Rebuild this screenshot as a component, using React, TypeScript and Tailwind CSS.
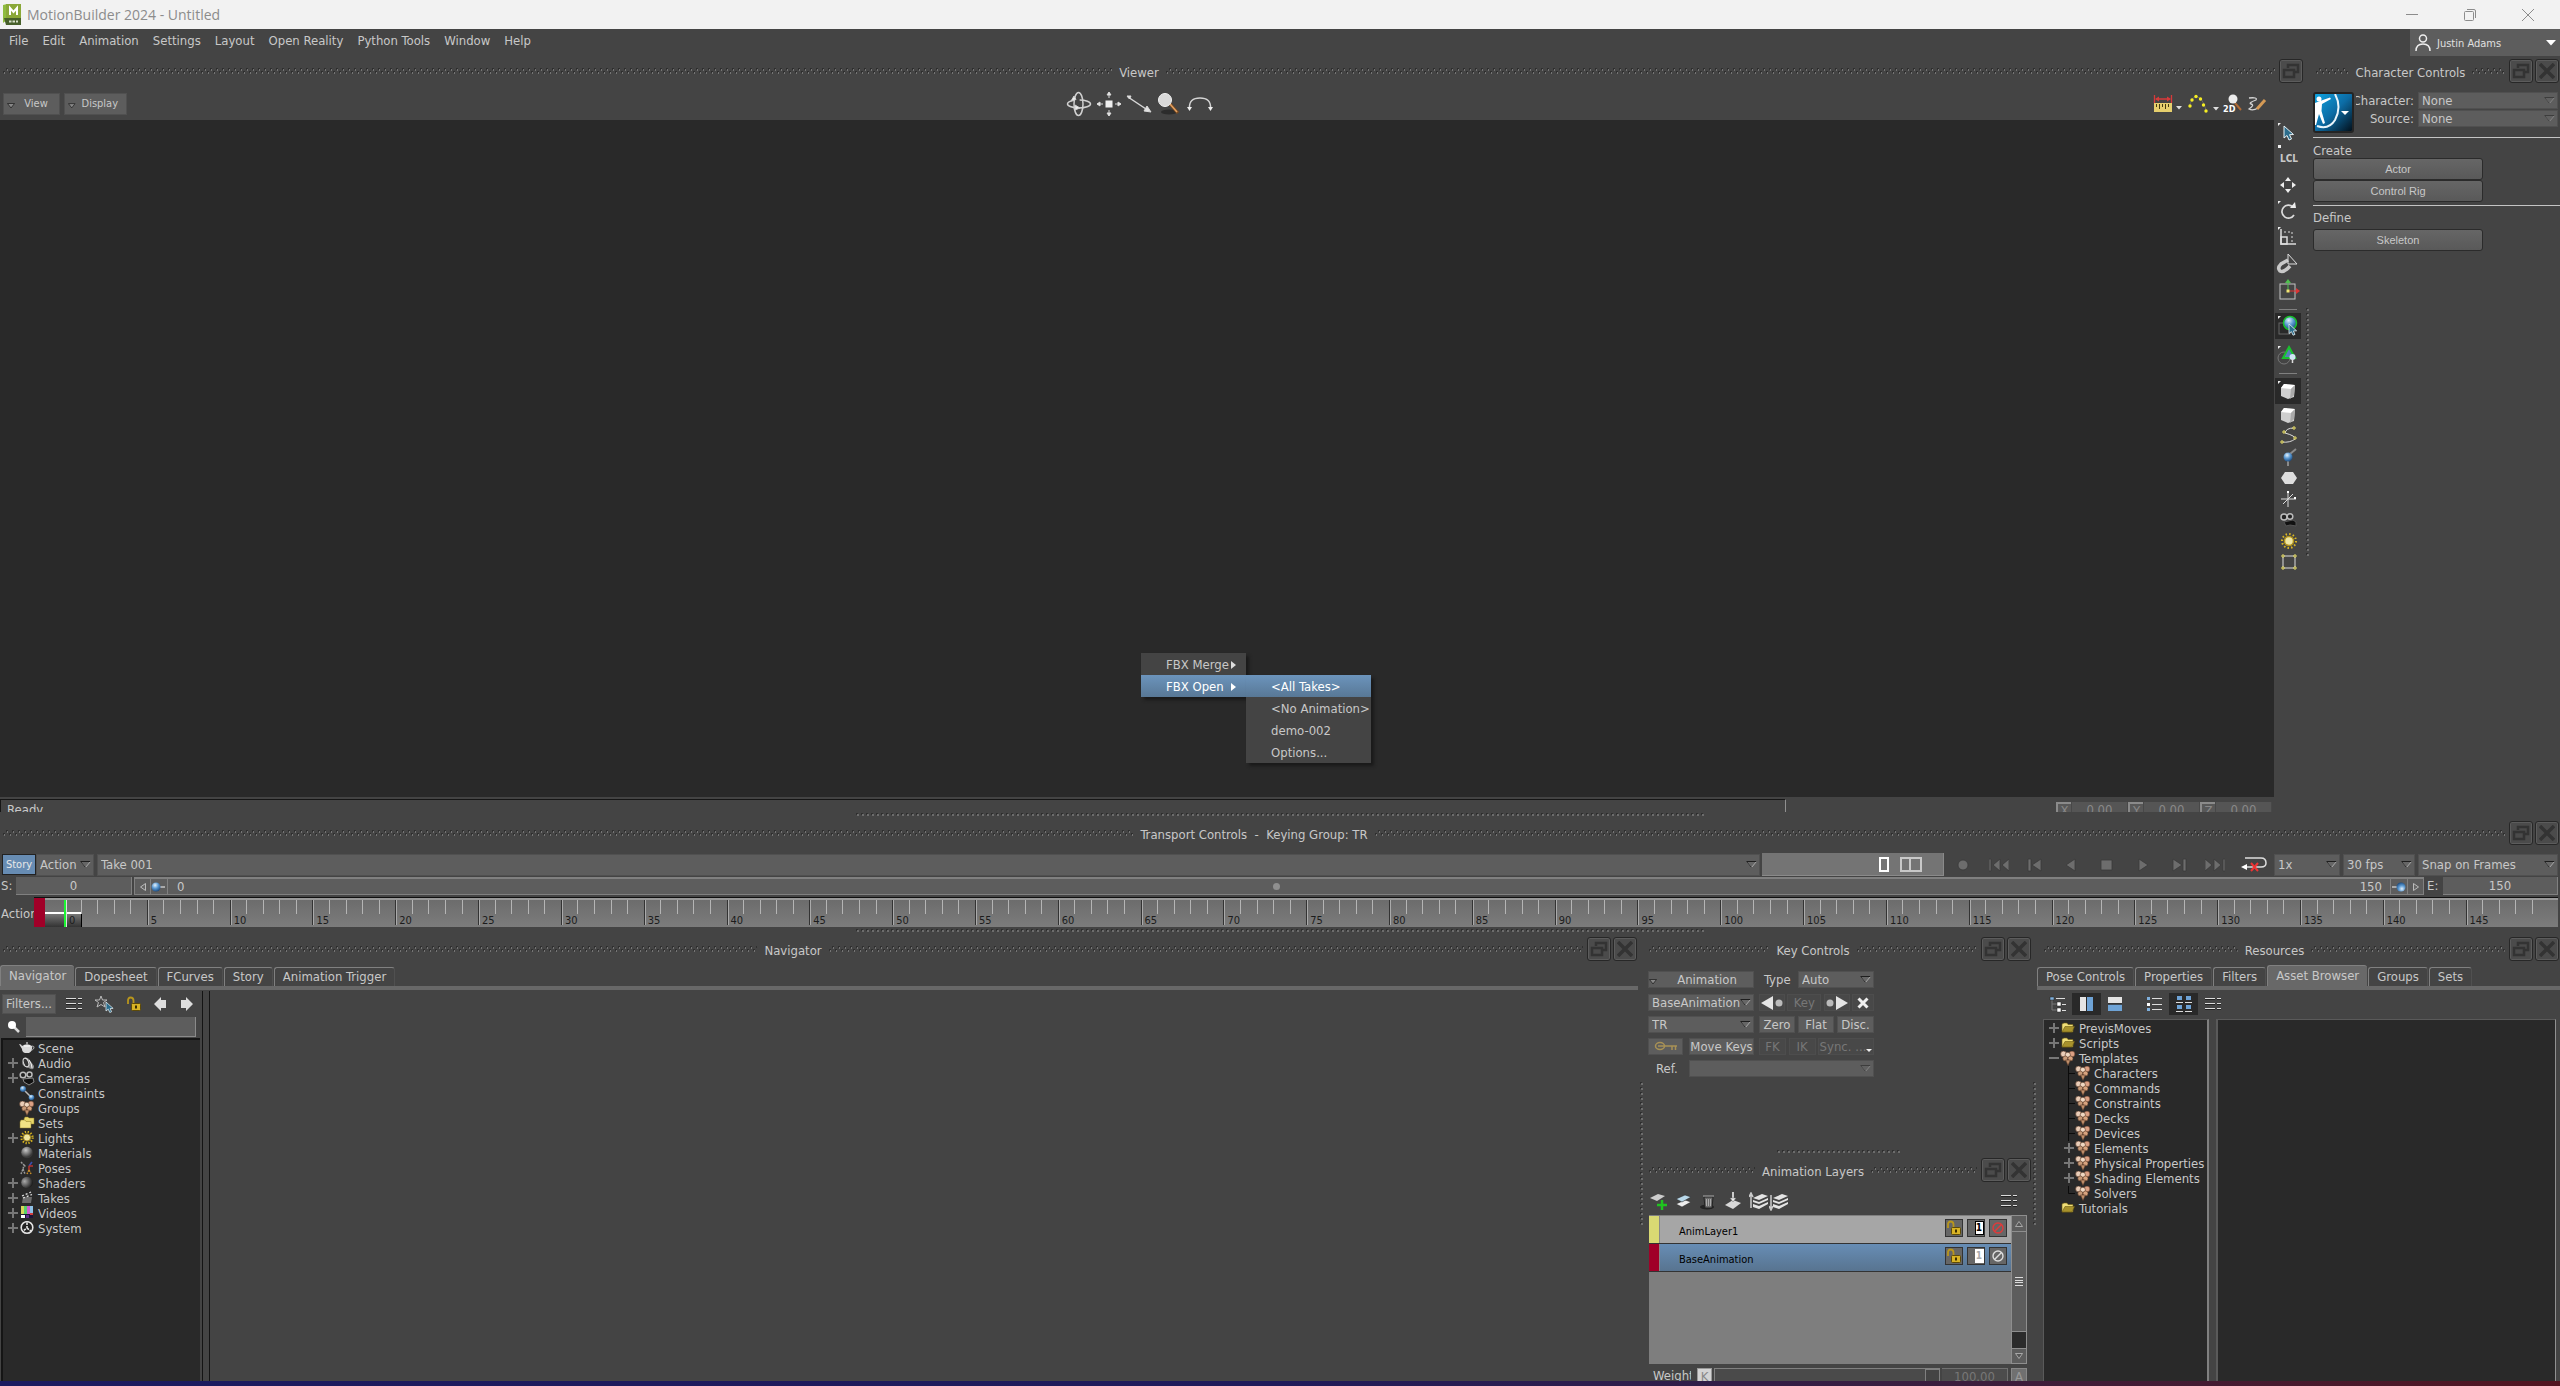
import type { ReactNode } from 'react';

const frames = Array.from({ length: 150 }, (_, i) => i);

const menus = ['File', 'Edit', 'Animation', 'Settings', 'Layout', 'Open Reality', 'Python Tools', 'Window', 'Help'];

const navigatorItems = [
  { label: 'Scene', icon: 'teapot', open: '' },
  { label: 'Audio', icon: 'audio', open: '+' },
  { label: 'Cameras', icon: 'camera', open: '+' },
  { label: 'Constraints', icon: 'constraint', open: '' },
  { label: 'Groups', icon: 'group', open: '' },
  { label: 'Sets', icon: 'sets', open: '' },
  { label: 'Lights', icon: 'sun', open: '+' },
  { label: 'Materials', icon: 'material', open: '' },
  { label: 'Poses', icon: 'pose', open: '' },
  { label: 'Shaders', icon: 'shader', open: '+' },
  { label: 'Takes', icon: 'take', open: '+' },
  { label: 'Videos', icon: 'video', open: '+' },
  { label: 'System', icon: 'system', open: '+' },
];

const assetItems = [
  { label: 'PrevisMoves', icon: 'folder', open: '+', child: false },
  { label: 'Scripts', icon: 'folder', open: '+', child: false },
  { label: 'Templates', icon: 'group', open: '-', child: false },
  { label: 'Characters', icon: 'group', open: '', child: true },
  { label: 'Commands', icon: 'group', open: '', child: true },
  { label: 'Constraints', icon: 'group', open: '', child: true },
  { label: 'Decks', icon: 'group', open: '', child: true },
  { label: 'Devices', icon: 'group', open: '', child: true },
  { label: 'Elements', icon: 'group', open: '+', child: true },
  { label: 'Physical Properties', icon: 'group', open: '+', child: true },
  { label: 'Shading Elements', icon: 'group', open: '+', child: true },
  { label: 'Solvers', icon: 'group', open: 'last', child: true },
  { label: 'Tutorials', icon: 'folder', open: '', child: false },
];

// Patterns and gradients shared by all the drawings
function Defs() {
  return (
    <svg width="0" height="0" className="absolute">
      <defs>
        <pattern id="hatch" width="6" height="6" patternUnits="userSpaceOnUse">
          <rect x="3" y="0" width="2" height="2" fill="#2f2f2f" />
          <rect x="4" y="1" width="1" height="2" fill="#757575" />
          <rect x="0" y="3" width="2" height="2" fill="#2f2f2f" />
          <rect x="1" y="4" width="1" height="2" fill="#757575" />
        </pattern>
        <pattern id="dots" width="5" height="5" patternUnits="userSpaceOnUse">
          <rect x="0" y="0" width="2" height="2" fill="#2f2f2f" />
          <rect x="1" y="1" width="2" height="2" fill="#6c6c6c" />
        </pattern>
        <radialGradient id="gray" cx="0.4" cy="0.3" r="0.6">
          <stop offset="0" stopColor="#c8c8c8" />
          <stop offset="1" stopColor="#3a3a3a" />
        </radialGradient>
        <radialGradient id="dark" cx="0.3" cy="0.4" r="0.7">
          <stop offset="0" stopColor="#aaaaaa" />
          <stop offset="1" stopColor="#1c1c1c" />
        </radialGradient>
        <radialGradient id="blue" cx="0.4" cy="0.3" r="0.7">
          <stop offset="0" stopColor="#e4f1fb" />
          <stop offset="0.5" stopColor="#5d9bd3" />
          <stop offset="1" stopColor="#1f4f84" />
        </radialGradient>
        <linearGradient id="logo" x1="0" y1="0" x2="1" y2="1">
          <stop offset="0" stopColor="#0fa3e0" />
          <stop offset="0.5" stopColor="#0c6ca5" />
          <stop offset="1" stopColor="#03111c" />
        </linearGradient>
      </defs>
    </svg>
  );
}

function Hatch() {
  return (
    <svg className="h-[6px] w-0 min-w-0 flex-1">
      <rect width="100%" height="6" fill="url(#hatch)" />
    </svg>
  );
}

function Handle({ className }: { className: string }) {
  return (
    <svg className={className}>
      <rect width="100%" height="100%" fill="url(#dots)" />
    </svg>
  );
}

function DockButtons({ close = true }: { close?: boolean }) {
  const box = 'flex h-6 w-6 items-center justify-center rounded-[3px] border border-[#272727] bg-[#4b4b4b] shadow-[inset_0_0_0_1px_#5c5c5c]';
  return (
    <div className="flex gap-[2px]">
      <button aria-label="Float" className={box}>
        <svg width="18" height="16" viewBox="0 0 18 16" fill="none" stroke="#333" strokeWidth="2.5">
          <path d="M6 5V2H16V9H13" />
          <rect x="2" y="7" width="10" height="7" />
        </svg>
      </button>
      {close && (
        <button aria-label="Close" className={box}>
          <svg width="16" height="16" viewBox="0 0 16 16" stroke="#333" strokeWidth="3.5">
            <path d="M1 1L15 15M15 1L1 15" />
          </svg>
        </button>
      )}
    </div>
  );
}

function DockHeader({ title, close = true }: { title: string; close?: boolean }) {
  return (
    <div className="flex h-[26px] items-center gap-1 pl-[3px] pr-px">
      <div className="flex min-w-0 flex-1 items-center gap-[7px]">
        <Hatch />
        <h2 className="whitespace-pre pt-[3px]">{title}</h2>
        <Hatch />
      </div>
      <DockButtons close={close} />
    </div>
  );
}

function Arrow({ dim = false }: { dim?: boolean }) {
  return (
    <svg width="11" height="7" viewBox="0 0 11 7" className={dim ? 'opacity-50' : ''}>
      <path d="M0.5 0.5H10.5L5.5 6.5Z" fill="#666" stroke="#a9a9a9" />
      <path d="M0.5 0.5H10.5M0.5 0.5L5.5 6.5" stroke="#1e1e1e" />
    </svg>
  );
}

function Combo({ value, label, className, dim = false }: { value: string; label: string; className: string; dim?: boolean }) {
  return (
    <div className={`relative ${className}`}>
      <select aria-label={label} className="h-full w-full appearance-none border border-[#505050] bg-[#5d5d5d] pl-[3px] text-[#c8c8c8]">
        <option>{value}</option>
      </select>
      <span className="pointer-events-none absolute inset-y-0 right-[3px] flex items-center">
        <Arrow dim={dim} />
      </span>
    </div>
  );
}

function FlatButton({ children, className = '', disabled = false }: { children: ReactNode; className?: string; disabled?: boolean }) {
  return (
    <button
      disabled={disabled}
      className={`flex h-[17px] items-center justify-center whitespace-nowrap border ${
        disabled ? 'border-[#4d4d4d] bg-[#484848] text-[#777]' : 'border-[#505050] bg-[#5d5d5d]'
      } ${className}`}
    >
      {children}
    </button>
  );
}

function Lock() {
  return (
    <svg width="16" height="16" viewBox="0 0 16 16">
      <path d="M2 8V4.500Q2 1.500 4.500 1.500Q7.500 1.500 7.500 4.500V8" fill="none" stroke="#b8961d" strokeWidth="1.800" />
      <rect x="5.500" y="7.500" width="9" height="7" rx="1" fill="#d8b325" stroke="#5d4a08" />
      <path d="M10 9.500V12.500" stroke="#3a2d00" strokeWidth="2" />
    </svg>
  );
}

function ListIcon() {
  return (
    <svg width="18" height="14" viewBox="0 0 18 14" stroke="#dcdcdc" strokeWidth="1">
      <path d="M1 1.500H11M13 1.500H17M1 6.500H11M13 6.500H17M1 11.500H11M13 11.500H17" />
      <path d="M1 2.500H11M13 2.500H17M1 7.500H11M13 7.500H17M1 12.500H11M13 12.500H17" stroke="#222" />
    </svg>
  );
}

function Cursor() {
  return <path d="M0 0L0 12L3 9.500L5 14L7.500 13L5.500 8.700L9.500 8.500Z" fill="#2c6d8c" stroke="#e8f2f6" />;
}

function TreeIcon({ name }: { name: string }) {
  return (
    <svg width="16" height="15" viewBox="0 0 16 15" className="shrink-0">
      {name === 'teapot' && (
        <g>
          <path d="M3 5Q8 1.500 13 5Q14 10 10 12H6Q3 11 3 8L0 3L2 3.500Z" fill="#d9d9d9" />
          <path d="M13 5Q15.500 5 15 7Q14 9 12 9.500" fill="none" stroke="#aaa" />
          <path d="M7 2H9M5 5H11" stroke="#fff" />
        </g>
      )}
      {name === 'audio' && (
        <g>
          <path d="M4 4Q6 0 10 3L15 10Q15 14 12 13L5 10Q2 8 4 4Z" fill="#8d8d8d" />
          <ellipse cx="7" cy="6.500" rx="2.500" ry="4.500" transform="rotate(-20 7 6.500)" fill="#333" stroke="#e0e0e0" />
          <path d="M10 4Q13 8 13 12" stroke="#f2f2f2" fill="none" />
        </g>
      )}
      {name === 'camera' && (
        <g>
          <circle cx="4" cy="4" r="2.800" fill="#222" stroke="#bbb" strokeWidth="1.500" />
          <circle cx="10.500" cy="3.500" r="2.500" fill="#222" stroke="#bbb" strokeWidth="1.500" />
          <path d="M4 8L14 7L15 11L10 14L5 11Z" fill="#111" stroke="#888" />
        </g>
      )}
      {name === 'constraint' && (
        <g>
          <path d="M4 3L13 12" stroke="#b9b9b9" strokeWidth="1.500" />
          <circle cx="4" cy="3" r="3" fill="url(#blue)" />
          <circle cx="12.500" cy="11.500" r="2.800" fill="url(#blue)" />
        </g>
      )}
      {name === 'group' && (
        <g stroke="#5a3a28" strokeWidth="0.600">
          <circle cx="3.500" cy="3" r="2.900" fill="#e9cdb8" />
          <circle cx="12" cy="3" r="2.900" fill="#dba084" />
          <circle cx="7.800" cy="4" r="2.700" fill="#f0d8c2" />
          <circle cx="5.300" cy="7.500" r="2.500" fill="#c79a78" />
          <circle cx="10.500" cy="7.500" r="2.500" fill="#d8a47f" />
          <path d="M5.500 9H10.500L8 14.500Z" fill="#c0906b" />
        </g>
      )}
      {name === 'sets' && (
        <g stroke="#8c7a25" strokeWidth="0.500">
          <path d="M5 3L6 1H9L10 2H15V8H5Z" fill="#e8d76a" />
          <path d="M1 6L2 4H6L7 5.500H12V12H1Z" fill="#f1e285" />
        </g>
      )}
      {name === 'sun' && (
        <g>
          <circle cx="8" cy="6.500" r="5.600" fill="none" stroke="#d8b520" strokeWidth="2.200" strokeDasharray="1.300 1.630" />
          <circle cx="8" cy="6.500" r="3.600" fill="#f0e6a0" stroke="#a88a1a" />
        </g>
      )}
      {name === 'material' && <circle cx="8" cy="6.500" r="5.800" fill="url(#gray)" />}
      {name === 'shader' && <circle cx="8" cy="6.500" r="5.800" fill="url(#dark)" />}
      {name === 'pose' && (
        <g fill="none" strokeWidth="1.500">
          <path d="M2 1L5 4L4 8L2 13M5 4L7 6M4 8L6 13" stroke="#999" strokeDasharray="2 1" />
          <path d="M13 1L10 5" stroke="#3b4fb0" />
          <path d="M10 5H14M10 5V9" stroke="#b8352f" />
          <path d="M10 9L8 13M10 9L12 13" stroke="#c88e2a" strokeDasharray="2 1" />
        </g>
      )}
      {name === 'take' && (
        <g>
          <path d="M4 6H13L12 12H3Z" fill="#6d6d6d" />
          <path d="M3 5L12 1L13 3L4 7Z" fill="#333" />
          <path d="M3 5L12 1M4 7L13 3.500" stroke="#e2e2e2" strokeWidth="1.300" strokeDasharray="2 2" />
        </g>
      )}
      {name === 'video' && (
        <g>
          <rect x="2" y="0" width="3" height="8" fill="#d6d65a" />
          <rect x="5" y="0" width="3" height="8" fill="#59cf6b" />
          <rect x="8" y="0" width="3" height="8" fill="#d35bd0" />
          <rect x="11" y="0" width="3" height="8" fill="#8fc1e6" />
          <rect x="2" y="8" width="12" height="4" fill="#1c1336" />
          <rect x="2" y="9" width="4" height="3" fill="#fff" />
          <rect x="7" y="9" width="3" height="3" fill="#5d2b86" />
          <rect x="11" y="7" width="3" height="2" fill="#d33c3c" />
        </g>
      )}
      {name === 'system' && (
        <g>
          <circle cx="8" cy="6.500" r="5.800" fill="#222" stroke="#e4e4e4" strokeWidth="1.600" />
          <path d="M8 1.500V7L3.500 10.500M8 7L12.500 10.500" stroke="#e4e4e4" strokeWidth="1.600" fill="none" strokeDasharray="2.500 1" />
        </g>
      )}
      {name === 'folder' && (
        <g stroke="#6c5c14" strokeWidth="0.600">
          <path d="M2 3L4 2H7L8 3.500H13V11H2Z" fill="#f0df78" />
          <path d="M2 11L5 5.500H14.500L12 11Z" fill="#a8922c" />
        </g>
      )}
    </svg>
  );
}

function TreeToggle({ open, child = false }: { open: string; child?: boolean }) {
  return (
    <svg width="11" height="15" viewBox="0 0 11 15" className="shrink-0">
      {open === '+' && <path d="M0 7H10M5 2V12" stroke="#777" strokeWidth="2" />}
      {open === '-' && <path d="M0 7H10" stroke="#777" strokeWidth="2" />}
      {child && open === '' && <path d="M4.500 0V15M5 7.500H11" stroke="#0b0b0b" />}
      {open === 'last' && <path d="M4.500 0V7.500H11" fill="none" stroke="#0b0b0b" />}
    </svg>
  );
}

function Tabs({ items, active }: { items: string[]; active: string }) {
  return (
    <div className="flex h-[28px] items-end gap-px border-b-4 border-[#686868]">
      {items.map((item) => (
        <button
          key={item}
          className={`whitespace-nowrap rounded-t-[3px] border-l border-t border-[#808080] px-2 ${
            item === active ? 'h-[21px] bg-[#686868]' : 'h-[19px] border-r border-r-[#505050]'
          }`}
        >
          {item}
        </button>
      ))}
    </div>
  );
}

function CharacterControls() {
  const wide = 'flex h-[22px] w-[170px] items-center justify-center rounded-[3px] border border-[#2b2b2b] bg-linear-to-b from-[#666] to-[#595959] font-["Liberation_Sans",sans-serif] text-[11px]';
  return (
    <aside className="flex w-[247px] flex-col">
      <div className="pt-[2px]">
        <DockHeader title="Character Controls" />
      </div>
      <div className="mt-2 flex items-start">
        <button aria-label="Character menu" className="h-[41px] w-[41px] shrink-0 overflow-hidden rounded-[3px] border-2 border-[#242424]">
          <svg width="37" height="37" viewBox="0 0 37 37">
            <rect width="37" height="37" fill="url(#logo)" />
            <path d="M2 32Q14 36 20 26Q27 13 20 0" fill="none" stroke="#e9f4fa" strokeWidth="2" />
            <circle cx="4" cy="5" r="2.500" fill="#fff" />
            <path d="M0 9L5 7L15 3.500L16 5L7 10L6.500 17L10 29L8 30L4 20L1 31H0Z" fill="#fff" />
            <path d="M26 17H34L30 21Z" fill="#fff" />
          </svg>
        </button>
        <div className="flex min-w-0 flex-1 flex-col gap-px pl-[2px] pr-[2px]">
          <div className="flex items-center gap-1">
            <span className="flex w-[58px] justify-end overflow-hidden whitespace-nowrap">Character:</span>
            <Combo value="None" label="Character" className="h-[17px] flex-1" dim />
          </div>
          <div className="flex items-center gap-1">
            <span className="flex w-[58px] justify-end">Source:</span>
            <Combo value="None" label="Source" className="h-[17px] flex-1" dim />
          </div>
        </div>
      </div>
      <div className="mt-1 border-t border-[#c4c4c4] pt-[5px]">
        <h3 className="leading-[15px]">Create</h3>
        <button className={wide}>Actor</button>
        <button className={wide}>Control Rig</button>
      </div>
      <div className="mt-[3px] border-t border-[#c4c4c4] pt-1">
        <h3 className="mb-1 leading-[15px]">Define</h3>
        <button className={wide}>Skeleton</button>
      </div>
    </aside>
  );
}

function ViewerToolbar() {
  return (
    <div className="flex h-8 items-center justify-between pl-[3px] pr-[7px]">
      <div className="flex w-[124px] gap-1">
        {['View', 'Display'].map((name) => (
          <button key={name} className="flex h-[22px] w-[63px] items-center gap-[6px] border border-[#505050] bg-[#5d5d5d] pl-[3px] text-[11px]">
            <svg width="8" height="6" viewBox="0 0 8 6" className="mt-1"><path d="M0.500 0.500H7.500L4 5Z" fill="#888" stroke="#222" strokeWidth="0.800" /></svg>
            <span className="flex-1 pr-2 text-center">{name}</span>
          </button>
        ))}
      </div>
      <div className="flex items-center gap-1">
        <button aria-label="Orbit">
          <svg width="26" height="26" viewBox="0 0 26 26" fill="none" stroke="#d0d0d0" strokeWidth="1.500">
            <ellipse cx="13" cy="13" rx="11.500" ry="4" strokeDasharray="34 5 60" />
            <ellipse cx="12.500" cy="13" rx="4.500" ry="11.500" />
            <path d="M14 17L9 14V19ZM8 5L5 10L10 8.500Z" fill="#eee" strokeWidth="1" />
          </svg>
        </button>
        <button aria-label="Pan">
          <svg width="26" height="26" viewBox="0 0 26 26" fill="#eee" stroke="#d8d8d8" strokeWidth="1">
            <rect x="9.500" y="9.500" width="7" height="7" stroke="none" />
            <path d="M13 1V7M13 19V25M1 13H7M19 13H25" />
            <path d="M11 4L13 1L15 4ZM11 22L13 25L15 22ZM4 11L1 13L4 15ZM22 11L25 13L22 15Z" />
          </svg>
        </button>
        <button aria-label="Dolly">
          <svg width="26" height="20" viewBox="0 0 26 20" fill="#e2e2e2" stroke="#d8d8d8">
            <path d="M2 3L23 17" strokeWidth="1.500" />
            <path d="M1 2H5L3.500 5ZM25 18L18 17L21 12Z" />
          </svg>
        </button>
        <button aria-label="Zoom">
          <svg width="26" height="24" viewBox="0 0 26 24">
            <ellipse cx="13" cy="20" rx="8" ry="2.500" fill="#2c2c2c" />
            <path d="M14 12L22 21" stroke="#7a4a20" strokeWidth="3" />
            <path d="M14 12L21 20" stroke="#e2a263" strokeWidth="1.500" />
            <circle cx="9" cy="8" r="6.500" fill="#d9d9d9" stroke="#f2f2f2" />
          </svg>
        </button>
        <button aria-label="Roll">
          <svg width="28" height="18" viewBox="0 0 28 18">
            <path d="M3.500 13Q3 3 14 3Q25 3 24.500 13" fill="none" stroke="#d4d4d4" strokeWidth="1.500" />
            <path d="M1 12H6L3.500 16ZM22 12H27L24.500 16Z" fill="#eee" />
          </svg>
        </button>
      </div>
      <div className="flex items-center gap-1">
        <button aria-label="Ruler" className="flex items-end gap-[3px]">
          <svg width="20" height="18" viewBox="0 0 20 18">
            <path d="M1.500 0V8M18.500 0V8M3 4H17" stroke="#d63a3a" strokeWidth="1.300" />
            <path d="M2 4L6 1.500V6.500ZM18 4L14 1.500V6.500Z" fill="#d63a3a" />
            <rect x="1" y="8" width="18" height="9" fill="#e6cf6d" />
            <path d="M3.500 9V12M6.500 9V14M9.500 9V12M12.500 9V14M15.500 9V12" stroke="#443a10" />
          </svg>
          <svg width="6" height="7" viewBox="0 0 6 7"><path d="M0 0H6L3 3.500Z" fill="#ddd" /></svg>
        </button>
        <button aria-label="Trajectory" className="flex items-end gap-[3px]">
          <svg width="24" height="20" viewBox="0 0 24 20" fill="#f6ee22">
            <path d="M3 13L6 5L10 2L15 5L18 10L20 16" fill="none" stroke="#666" />
            <circle cx="4" cy="12" r="1.700" /><circle cx="6" cy="6" r="1.700" /><circle cx="10" cy="2.500" r="1.700" />
            <circle cx="14.500" cy="5" r="1.700" /><circle cx="17.500" cy="11" r="1.700" /><circle cx="20" cy="17" r="1.700" />
          </svg>
          <svg width="6" height="7" viewBox="0 0 6 7"><path d="M0 0H6L3 3.500Z" fill="#ddd" /></svg>
        </button>
        <button aria-label="2D magnifier" className="relative">
          <svg width="20" height="20" viewBox="0 0 20 20">
            <path d="M12 9L18 16" stroke="#b06a35" strokeWidth="2" />
            <circle cx="10" cy="5" r="4.500" fill="#ececec" />
          </svg>
          <span className="absolute bottom-0 left-0 text-[9px] leading-[9px] font-bold text-white">2D</span>
        </button>
        <button aria-label="Pencil">
          <svg width="20" height="18" viewBox="0 0 20 18" fill="none">
            <path d="M2 3Q11 2 9 5Q1 8 4 9Q8 10 2 14Q6 16 11 13" stroke="#d4d4d4" strokeWidth="1.300" />
            <path d="M10 14L18 5" stroke="#d59a55" strokeWidth="3" />
          </svg>
        </button>
      </div>
    </div>
  );
}

function Tool({ label, on = false, mark = false, className, children }: { label: string; on?: boolean; mark?: boolean; className: string; children: ReactNode }) {
  return (
    <button aria-label={label} className={`flex w-[26px] items-center justify-center ${on ? 'bg-[#292929]' : ''} ${className}`}>
      <svg width="24" height="24" viewBox="0 0 24 24" fill="none" stroke="#dcdcdc" className="shrink-0">
        {mark && <path d="M2 2H5L2 5Z" fill="#eee" stroke="none" />}
        {children}
      </svg>
    </button>
  );
}

function Cube() {
  return (
    <g stroke="none">
      <path d="M5 9L8 5L19 6L18 18L12 20L5 17Z" fill="#cfcfcf" />
      <path d="M5 9L8 5L19 6L15 10Z" fill="#fff" />
      <path d="M15 10L19 6L18 16L14 20Z" fill="#aaa" />
    </g>
  );
}

function SideTools() {
  return (
    <div className="flex w-[32px] flex-col items-start pl-px">
      <Tool label="Select" mark className="h-[25px]"><g transform="translate(8 5)"><Cursor /></g></Tool>
      <button className="relative flex h-[26px] w-[28px] items-center justify-center pt-[2px] text-[10px] font-bold">
        <span className="absolute left-[3px] top-0 h-[3px] w-[3px] bg-[#eee]" />
        LCL
      </button>
      <Tool label="Translate" className="h-[27px]">
        <path d="M12 4L9 8H15ZM12 20L9 16H15ZM4 12L8 9V15ZM20 12L16 9V15Z" fill="#eee" stroke="none" />
      </Tool>
      <Tool label="Rotate" mark className="h-[26px]">
        <path d="M17 8A6.500 6.500 0 1 0 18 16" strokeWidth="1.700" />
        <path d="M14 9L20 9L19 3Z" fill="#eee" stroke="none" />
      </Tool>
      <Tool label="Scale" mark className="h-[26px]">
        <path d="M5 4V19H20" strokeWidth="1.500" />
        <rect x="5" y="12" width="6" height="7" strokeWidth="1.500" />
        <path d="M8 7H16V19" strokeDasharray="2 2" />
      </Tool>
      <Tool label="Snap" className="h-[26px]">
        <path d="M12 9L5 13Q1 17 4 20Q8 22 14 15" strokeWidth="3.500" stroke="#c8c8c8" />
        <path d="M12 3L21 13H12Z" />
      </Tool>
      <Tool label="Reference axis" className="h-[30px]">
        <rect x="4" y="5" width="15" height="15" stroke="#c4c4c4" />
        <path d="M12 12V2" stroke="#4fc04f" /><path d="M9 4L12 0L15 4Z" fill="#4fc04f" stroke="none" />
        <path d="M12 12H22" stroke="#d33" /><path d="M20 9L24 12L20 15Z" fill="#d33" stroke="none" />
        <rect x="11" y="11" width="2" height="2" fill="#fff9a0" stroke="#e8e06a" />
      </Tool>
      <div className="my-[3px] ml-1 h-px w-[18px] bg-[#808080]" />
      <Tool label="Model selection" on mark className="h-[26px]">
        <rect x="3" y="9" width="11" height="11" stroke="#666" />
        <circle cx="14" cy="9" r="6.500" fill="url(#blue)" stroke="#19c12c" strokeWidth="1.500" />
        <g transform="translate(13 10) scale(0.800)"><Cursor /></g>
      </Tool>
      <Tool label="Shape selection" mark className="mt-1 h-[26px]">
        <circle cx="8" cy="14" r="6" stroke="#777" />
        <path d="M13 3L19 14H7Z" fill="#5580b8" stroke="#19c12c" strokeWidth="2" />
        <circle cx="16.500" cy="13" r="3" fill="#cfe6f5" stroke="none" /><path d="M16.500 15V19" strokeWidth="1.500" />
      </Tool>
      <div className="my-1 ml-1 h-px w-[18px] bg-[#808080]" />
      <Tool label="Shaded" on mark className="h-[26px]"><Cube /></Tool>
      <Tool label="Models" className="h-[21px]"><Cube /></Tool>
      <Tool label="Paths" className="h-[21px]">
        <path d="M18 4Q10 4 9 9Q20 12 19 15Q14 19 6 18" />
        <path d="M17 3H19V5H17ZM7 7H9V9H7ZM18 13H20V15H18ZM5 17H7V19H5Z" fill="#333" stroke="#ece26a" />
      </Tool>
      <Tool label="Joints" className="h-[21px]">
        <path d="M14 9L20 4M12 15V21" stroke="#8a8a8a" strokeWidth="2" />
        <circle cx="12" cy="12" r="4.500" fill="url(#blue)" stroke="none" />
      </Tool>
      <Tool label="Effectors" className="h-[21px]"><path d="M9 6H17L21 12L17 18H9L5 12Z" fill="#dedede" stroke="none" /></Tool>
      <Tool label="Nulls" className="h-[21px]">
        <path d="M12 4V20M5 12H20M7 17L17 7" />
        <path d="M11 4H13V6H11ZM18 10H20V12H18Z" fill="#fff" stroke="none" />
      </Tool>
      <Tool label="Cameras" className="h-[21px]">
        <circle cx="8" cy="9" r="3" fill="#222" stroke="#bbb" strokeWidth="1.500" />
        <circle cx="14" cy="8.500" r="2.800" fill="#222" stroke="#bbb" strokeWidth="1.500" />
        <path d="M8 14L17 12L20 14V18L14 17L10 18Z" fill="#111" stroke="#555" />
      </Tool>
      <Tool label="Lights" className="h-[21px]">
        <circle cx="13" cy="12" r="7" stroke="#dcb821" strokeWidth="2" strokeDasharray="1.500 2.160" />
        <circle cx="13" cy="12" r="4.500" fill="#efe6a4" stroke="#b1921c" strokeWidth="1.500" />
      </Tool>
      <Tool label="Bounds" className="h-[21px]">
        <rect x="7" y="6" width="12" height="12" />
        <path d="M6 5H8V7H6ZM18 5H20V7H18ZM6 17H8V19H6ZM18 17H20V19H18Z" fill="#333" stroke="#ece26a" />
      </Tool>
    </div>
  );
}

function ContextMenu() {
  return (
    <div className="absolute left-[1141px] top-[533px] flex items-start leading-[16px]">
      <ul className="w-[105px] bg-[#444] shadow-[3px_3px_3px_#1a1a1a]">
        <li className="flex h-[22px] items-center justify-between whitespace-nowrap pl-[25px] pr-[10px] pt-px">
          FBX Merge<svg width="5" height="8" viewBox="0 0 5 8"><path d="M0 0L5 4L0 8Z" fill="#ddd" /></svg>
        </li>
        <li className="flex h-[22px] items-center justify-between whitespace-nowrap bg-linear-to-b from-[#6c94bc] to-[#587896] pl-[25px] pr-[10px] pt-px text-white">
          FBX Open<svg width="5" height="8" viewBox="0 0 5 8"><path d="M0 0L5 4L0 8Z" fill="#fff" /></svg>
        </li>
      </ul>
      <ul className="mt-[22px] w-[125px] bg-[#444] shadow-[3px_3px_3px_#1a1a1a]">
        <li className="flex h-[22px] items-center bg-linear-to-b from-[#6c94bc] to-[#587896] pl-[25px] pt-px text-white">&lt;All Takes&gt;</li>
        <li className="flex h-[22px] items-center whitespace-nowrap pl-[25px] pt-px">&lt;No Animation&gt;</li>
        <li className="flex h-[22px] items-center pl-[25px] pt-px">demo-002</li>
        <li className="flex h-[22px] items-center pl-[25px] pt-px">Options...</li>
      </ul>
    </div>
  );
}

function StatusBar() {
  return (
    <div className="flex h-[15px] shrink-0 justify-between overflow-hidden pt-[2px]">
      <div className="h-6 w-[1786px] border-l border-r border-t border-l-[#161616] border-t-[#161616] border-r-[#909090] pl-[6px] pt-[2px] leading-[16px]">Ready</div>
      <div className="flex pr-[288px] pt-[3px] text-[#888]">
        {['X', 'Y', 'Z'].map((axis) => (
          <label key={axis} className="flex">
            <span className="h-4 w-[15px] border-l-2 border-t-2 border-[#8a8a8a] bg-[#585858] text-center leading-[14px]">{axis}</span>
            <input defaultValue="0.00" disabled className="h-4 w-[57px] border-l border-r border-l-[#484848] border-r-[#484848] bg-[#555] text-center" />
          </label>
        ))}
      </div>
    </div>
  );
}

const transportIcons = [
  { label: 'Record', d: 'M5 8A5 5 0 1 0 15 8A5 5 0 1 0 5 8Z' },
  { label: 'Go to start', d: 'M0 2H2V14H0ZM11 2V14L4 8ZM20 2V14L13 8Z' },
  { label: 'Previous key', d: 'M3 2H6V14H3ZM16 2V14L7 8Z' },
  { label: 'Play backward', d: 'M14 2V14L5 8Z' },
  { label: 'Stop', d: 'M4 3H15V13H4Z' },
  { label: 'Play', d: 'M6 2V14L15 8Z' },
  { label: 'Next key', d: 'M14 2H17V14H14ZM4 2V14L13 8Z' },
  { label: 'Go to end', d: 'M18 2H20V14H18ZM0 2V14L7 8ZM9 2V14L16 8Z' },
];

function RangePin({ flip = false }: { flip?: boolean }) {
  return (
    <svg width="15" height="14" viewBox="0 0 15 14" className={flip ? 'rotate-180' : ''}>
      <path d="M8 7H14" stroke="#aaa" strokeWidth="2" />
      <circle cx="5" cy="7" r="4.500" fill="url(#blue)" />
    </svg>
  );
}

function Transport() {
  return (
    <section>
      <DockHeader title="Transport Controls  -  Keying Group: TR" />
      <div className="mt-[7px] flex h-[23px] items-center pl-[2px] pr-[2px]">
        <button className="h-[21px] w-[34px] border border-[#222] bg-[#678cb3] text-[11px] text-[#e8e8e8]">Story</button>
        <Combo value="Action" label="Mode" className="mr-[3px] h-[22px] w-[58px]" />
        <Combo value="Take 001" label="Take" className="mr-[2px] h-[22px] flex-1" />
        <div className="flex h-[23px] w-[182px] items-center justify-end gap-[11px] border-b border-r border-[#8a8a8a] bg-[#747474] pr-[21px]">
          <span className="h-[15px] w-[10px] border-2 border-white" />
          <span className="flex">
            <span className="h-[15px] w-[11px] border-2 border-[#c8c8c8]" />
            <span className="h-[15px] w-[11px] border-2 border-l-0 border-[#c8c8c8]" />
          </span>
        </div>
        <div className="flex gap-4 pl-[9px]">
          {transportIcons.map((icon) => (
            <button key={icon.label} aria-label={icon.label}>
              <svg width="20" height="16" viewBox="0 0 20 16"><path d={icon.d} fill="#6d6d6d" stroke="#3a3a3a" strokeWidth="0.800" /></svg>
            </button>
          ))}
        </div>
        <button aria-label="Loop" className="ml-4 mr-[5px]">
          <svg width="28" height="17" viewBox="0 0 28 17" fill="none">
            <path d="M4 2H20Q25 2 25 7Q25 11 20 11H4" stroke="#ddd" strokeWidth="1.500" />
            <path d="M0 11L6 8V14Z" fill="#fff" />
            <path d="M10 7L17 15M17 7L10 15" stroke="#e33" strokeWidth="2" />
          </svg>
        </button>
        <div className="flex gap-[3px]">
          <Combo value="1x" label="Speed" className="h-[22px] w-[66px]" />
          <Combo value="30 fps" label="Frame rate" className="h-[22px] w-[72px]" />
          <Combo value="Snap on Frames" label="Snap" className="h-[22px] w-[140px]" />
        </div>
      </div>
      <div className="mt-px flex h-[18px] items-center pl-px pr-[2px]">
        <label htmlFor="start" className="w-[15px]">S:</label>
        <input id="start" defaultValue="0" className="h-[18px] w-[116px] border-b border-r border-[#808080] bg-[#5d5d5d] text-center" />
        <div className="ml-[2px] flex h-[18px] flex-1 items-center border border-t-2 border-[#808080] bg-[#5d5d5d]">
          <button aria-label="Scroll left" className="flex h-full w-4 items-center justify-center border-r border-[#808080]">
            <svg width="6" height="8" viewBox="0 0 6 8"><path d="M5.500 0.500V7.500L0.500 4Z" fill="#666" stroke="#bbb" /></svg>
          </button>
          <span className="flex h-full w-[17px] items-center border-r border-[#808080]"><RangePin /></span>
          <span className="w-[30px] pl-[9px]">0</span>
          <span className="flex flex-1 justify-center"><span className="h-[7px] w-[7px] rounded-full bg-[#8f8f8f]" /></span>
          <span className="w-[36px] pr-[8px] text-right">150</span>
          <span className="flex h-full w-[17px] items-center border-l border-[#808080]"><RangePin flip /></span>
          <button aria-label="Scroll right" className="flex h-full w-4 items-center justify-center border-l border-[#808080]">
            <svg width="6" height="8" viewBox="0 0 6 8"><path d="M0.500 0.500V7.500L5.500 4Z" fill="#666" stroke="#bbb" /></svg>
          </button>
        </div>
        <label htmlFor="end" className="ml-[3px] w-4">E:</label>
        <input id="end" defaultValue="150" className="h-[18px] w-[115px] border-b border-r border-[#808080] bg-[#5d5d5d] text-center" />
      </div>
      <div className="mt-[2px] flex h-[30px] pl-px pr-[2px]">
        <span className="flex w-[33px] items-center overflow-hidden pt-1">Action</span>
        <div className="relative flex flex-1 overflow-hidden border-t border-[#111] bg-linear-to-b from-[#6b6b6b] to-[#7c7c7c] pr-[9px] shadow-[inset_0_2px_0_#999]">
          <div className="w-[11px] bg-[#a00028]" />
          <div className="w-[19px]" />
          <div className="absolute bottom-0 left-[11px] h-[15px] w-[37px] border-r border-t-2 border-t-white border-r-black bg-linear-to-b from-[#777] to-[#333]" />
          {frames.map((f) => (
            <div key={f} className="relative flex min-w-0 flex-1 pt-[2px]">
              {f === 0 && <span className="h-[28px] w-[3px] shrink-0 border-r border-[#ddd] bg-[#1cf532]" />}
              {f > 0 && f % 5 === 0 && <span className="h-[25px] w-[2px] shrink-0 border-l border-[#333] bg-[#aaa]" />}
              {f % 5 !== 0 && <span className="h-[14px] w-px shrink-0 bg-[#b4b4b4]" />}
              {f % 5 === 0 && <span className="self-end whitespace-nowrap pl-[2px] text-[11px] leading-[12px] text-[#1c1c1c]">{f}</span>}
            </div>
          ))}
        </div>
      </div>
    </section>
  );
}

function Navigator() {
  return (
    <section className="flex min-w-0 flex-1 flex-col">
      <DockHeader title="Navigator" />
      <Tabs items={['Navigator', 'Dopesheet', 'FCurves', 'Story', 'Animation Trigger']} active="Navigator" />
      <div className="flex min-h-0 flex-1 pt-px">
        <div className="flex w-[203px] flex-col border-r border-[#141414] pr-[2px] pt-[3px]">
          <div className="flex items-center pl-[2px]">
            <button className="h-[20px] w-[54px] border border-[#505050] bg-[#5d5d5d] leading-[16px]">Filters...</button>
            <div className="flex flex-1 items-center justify-between pl-[9px] pr-[6px]">
              <button aria-label="Columns"><ListIcon /></button>
              <button aria-label="Favorites">
                <svg width="20" height="18" viewBox="0 0 20 18">
                  <path d="M7 1L8.500 5H13L9.500 7.500L11 12L7 9.500L3 12L4.500 7.500L1 5H5.500Z" fill="#444" stroke="#bbb" />
                  <g transform="translate(12 7) scale(0.750)"><Cursor /></g>
                </svg>
              </button>
              <button aria-label="Lock"><Lock /></button>
              <button aria-label="Back">
                <svg width="15" height="16" viewBox="0 0 15 16"><path d="M1 8L8 1V4H13V12H8V15Z" fill="#dedede" /></svg>
              </button>
              <button aria-label="Forward">
                <svg width="15" height="16" viewBox="0 0 15 16"><path d="M14 8L7 1V4H2V12H7V15Z" fill="#dedede" /></svg>
              </button>
            </div>
          </div>
          <div className="mt-[2px] flex h-[21px] items-center pl-[7px] pr-1">
            <svg width="14" height="14" viewBox="0 0 14 14" className="mr-[5px]">
              <path d="M7 7L12 12" stroke="#ddd" strokeWidth="2.500" /><circle cx="5" cy="5" r="4" fill="#fff" />
            </svg>
            <input aria-label="Search" className="h-[20px] min-w-0 flex-1 border-b border-r border-[#8a8a8a] bg-[#5d5d5d]" />
          </div>
          <ul className="ml-px mt-px flex-1 border-l-2 border-t-2 border-[#151515] bg-[#292929] pt-px leading-[15px]">
            {navigatorItems.map((item) => (
              <li key={item.label} className="flex h-[15px] items-center pl-[5px]">
                <TreeToggle open={item.open} />
                <TreeIcon name={item.icon} />
                <span className="pl-[3px]">{item.label}</span>
              </li>
            ))}
          </ul>
        </div>
        <div className="ml-[6px] flex-1 border-l border-[#141414]" />
      </div>
    </section>
  );
}

function KeyControls() {
  return (
    <section className="h-[214px]">
      <DockHeader title="Key Controls" />
      <div className="mt-[9px] flex w-[228px] flex-col gap-[5px] pl-[2px]">
        <div className="flex">
          <FlatButton className="w-[106px] gap-[20px] pr-4">
            <svg width="8" height="6" viewBox="0 0 8 6" className="mt-1"><path d="M0.500 0.500H7.500L4 5Z" fill="#888" stroke="#222" strokeWidth="0.800" /></svg>
            Animation
          </FlatButton>
          <span className="flex-1 pl-[10px] leading-[18px]">Type</span>
          <Combo value="Auto" label="Type" className="h-[17px] w-[76px]" />
        </div>
        <div className="flex justify-between">
          <Combo value="BaseAnimation" label="Layer" className="h-[17px] w-[106px]" />
          <div className="flex w-[115px] justify-between">
            <FlatButton className="w-[26px]" disabled>
              <svg width="24" height="14" viewBox="0 0 24 14" fill="#e4e4e4"><path d="M1 7L13 0V14Z" /><circle cx="19" cy="7" r="3.500" fill="#bbb" /></svg>
            </FlatButton>
            <FlatButton className="w-[34px]" disabled>Key</FlatButton>
            <FlatButton className="w-[26px]" disabled>
              <svg width="24" height="14" viewBox="0 0 24 14" fill="#e4e4e4"><path d="M23 7L11 0V14Z" /><circle cx="5" cy="7" r="3.500" fill="#bbb" /></svg>
            </FlatButton>
            <FlatButton className="w-[22px]" disabled>
              <svg width="12" height="12" viewBox="0 0 12 12" stroke="#eee" strokeWidth="3"><path d="M1.500 1.500L10.500 10.500M10.500 1.500L1.500 10.500" /></svg>
            </FlatButton>
          </div>
        </div>
        <div className="flex justify-between">
          <Combo value="TR" label="Keying group" className="h-[17px] w-[106px]" />
          <div className="flex w-[115px] justify-between">
            <FlatButton className="w-[36px]">Zero</FlatButton>
            <FlatButton className="w-[36px]">Flat</FlatButton>
            <FlatButton className="w-[37px]">Disc.</FlatButton>
          </div>
        </div>
        <div className="flex justify-between">
          <div className="flex w-[106px] justify-between">
            <FlatButton className="w-[35px]">
              <svg width="24" height="11" viewBox="0 0 24 11" fill="none" stroke="#a89155" strokeWidth="1.500">
                <ellipse cx="6" cy="5" rx="4.500" ry="3.500" /><path d="M4 5H23M18 5V9M21.500 5V9" />
              </svg>
            </FlatButton>
            <FlatButton className="w-[65px]">Move Keys</FlatButton>
          </div>
          <div className="flex w-[115px] justify-between">
            <FlatButton className="w-[27px]" disabled>FK</FlatButton>
            <FlatButton className="w-[27px]" disabled>IK</FlatButton>
            <FlatButton className="w-[56px]" disabled>
              Sync. ...
              <svg width="6" height="12" viewBox="0 0 6 12"><path d="M0 8H6L3 11Z" fill="#eee" /></svg>
            </FlatButton>
          </div>
        </div>
        <div className="flex">
          <span className="w-[41px] pl-2 leading-[18px]">Ref.</span>
          <Combo value="" label="Reference" className="h-[17px] flex-1" dim />
        </div>
      </div>
    </section>
  );
}

function LayerRow({ name, base }: { name: string; base: boolean }) {
  const box = 'flex h-[18px] w-[18px] items-center justify-center border border-[#333] bg-[#666]';
  return (
    <div className={`flex h-[28px] border-b border-[#333] ${base ? 'bg-linear-to-b from-[#678db5] to-[#587490]' : 'bg-[#a6a6a6]'}`}>
      <span className={`w-[11px] border-r border-[#888] ${base ? 'bg-[#a00028]' : 'bg-[#d9d973]'}`} />
      <span className="flex-1 pl-[19px] pt-[9px] text-[11px] leading-[14px] text-black">{name}</span>
      <span className="flex gap-1 pr-1 pt-[3px]">
        <button aria-label="Lock layer" className={box}><Lock /></button>
        <button aria-label="Solo layer" className={box}>
          <span className={`ml-[6px] h-[14px] w-[9px] bg-white text-center text-[10px] font-bold ${base ? 'leading-[14px] text-[#aaa]' : 'border border-black leading-[12px] text-black'}`}>1</span>
        </button>
        <button aria-label="Mute layer" className={`${box} ${base ? 'text-[#ddd]' : 'text-[#e03a3a]'}`}>
          <svg width="14" height="14" viewBox="0 0 14 14" fill="none" stroke="currentColor" strokeWidth="1.400">
            <circle cx="7" cy="7" r="5" /><path d="M3.500 10.500L10.500 3.500" />
          </svg>
        </button>
      </span>
    </div>
  );
}

const layerIcons = [
  { label: 'Add layer', el: <g><path d="M1 6L9 2L16 4L8 9Z" fill="#ccc" /><path d="M13 8V18M8 13H18" stroke="#1fc31f" strokeWidth="2.500" /></g> },
  { label: 'Duplicate layer', el: <g><path d="M2 12L11 8L17 10L8 15Z" fill="#eee" stroke="#222" strokeWidth="0.500" /><path d="M2 7L11 3L17 5L8 10Z" fill="#b9d8ea" stroke="#222" strokeWidth="0.500" /></g> },
  { label: 'Delete layer', el: <g><ellipse cx="8" cy="15" rx="7" ry="2.500" fill="#222" /><path d="M5 5H14L13 16H6Z" fill="#6c6c6c" stroke="#222" /><path d="M4 4H15M7.500 7V14M9.500 7V14M11.500 7V14" stroke="#aaa" /></g> },
  { label: 'Merge layers', el: <g><path d="M1 13L9 8L17 11L9 17Z" fill="#d8d8d8" /><path d="M9 0V7" stroke="#ccc" strokeWidth="2" /><path d="M6 6H12L9 10Z" fill="#eee" stroke="#666" strokeWidth="0.500" /></g> },
  { label: 'Move layer up', el: <g><path d="M4 6L13 2L19 4L10 8ZM4 8L10 10L19 6V8L10 12L4 10ZM4 12L10 14L19 10V12L10 17L4 15Z" fill="#e4e4e4" /><path d="M2 16V3M0 5L2 1L4 5" stroke="#ccc" strokeWidth="1.500" fill="none" /></g> },
  { label: 'Move layer down', el: <g><path d="M4 6L13 2L19 4L10 8ZM4 8L10 10L19 6V8L10 12L4 10ZM4 12L10 14L19 10V12L10 17L4 15Z" fill="#e4e4e4" /><path d="M2 3V16M0 14L2 18L4 14" stroke="#ccc" strokeWidth="1.500" fill="none" /></g> },
];

function AnimationLayers() {
  return (
    <section className="flex min-h-0 flex-1 flex-col">
      <Handle className="mx-auto h-[4px] w-[124px]" />
      <div className="mt-[3px]">
        <DockHeader title="Animation Layers" />
      </div>
      <div className="flex h-[32px] items-center justify-between pl-[3px] pr-[14px] pt-1">
        <div className="flex gap-[6px]">
          {layerIcons.map((icon) => (
            <button key={icon.label} aria-label={icon.label} className="last:-ml-[5px]">
              <svg width="19" height="19" viewBox="0 0 19 19">{icon.el}</svg>
            </button>
          ))}
        </div>
        <button aria-label="Layer options"><ListIcon /></button>
      </div>
      <div className="ml-[3px] mr-[5px] flex h-[149px] bg-[#7e7e7e]">
        <div className="flex-1 border-t border-[#808080]">
          <LayerRow name="AnimLayer1" base={false} />
          <LayerRow name="BaseAnimation" base />
        </div>
        <div className="flex w-4 flex-col border border-[#8e8e8e] bg-[#2b2b2b]">
          <button aria-label="Scroll up" className="flex h-[15px] items-center justify-center bg-[#5d5d5d]">
            <svg width="8" height="6" viewBox="0 0 8 6"><path d="M0.500 5.500H7.500L4 0.500Z" fill="#555" stroke="#bbb" strokeWidth="0.800" /></svg>
          </button>
          <div className="flex h-[101px] items-center justify-center border-y border-[#8e8e8e] bg-[#5d5d5d]">
            <svg width="8" height="9" viewBox="0 0 8 9" stroke="#ddd"><path d="M0 0.500H8M0 3.500H8M0 5.500H8M0 8.500H8" /></svg>
          </div>
          <div className="flex-1" />
          <button aria-label="Scroll down" className="flex h-[15px] items-center justify-center border-t border-[#8e8e8e] bg-[#5d5d5d]">
            <svg width="8" height="6" viewBox="0 0 8 6"><path d="M0.500 0.500H7.500L4 5.500Z" fill="#555" stroke="#bbb" strokeWidth="0.800" /></svg>
          </button>
        </div>
      </div>
      <div className="ml-[7px] mr-[5px] mt-1 flex min-h-0 flex-1 overflow-hidden">
        <span className="w-[38px] overflow-hidden leading-[16px]">Weight</span>
        <button className="ml-[6px] h-[18px] w-[15px] border border-[#999] bg-[#d4d4d4] leading-[16px] text-[#888]">K</button>
        <div className="ml-[2px] flex h-[18px] flex-1 justify-end border-l border-t border-[#808080] bg-[#4a4a4a]">
          <span className="w-[15px] border border-[#808080] bg-[#444]" />
        </div>
        <input aria-label="Weight" defaultValue="100.00" disabled className="ml-[2px] h-[16px] w-[66px] border-r border-t border-[#707070] bg-[#4c4c4c] text-center text-[#777]" />
        <button disabled className="ml-[3px] h-[18px] w-[16px] border border-[#888] bg-[#707070] leading-[16px] text-[#999]">A</button>
      </div>
    </section>
  );
}

function Resources() {
  const toolButton = 'flex h-[22px] w-[29px] items-center justify-center';
  return (
    <section className="flex w-[523px] flex-col">
      <div className="pl-1"><DockHeader title="Resources" /></div>
      <Tabs items={['Pose Controls', 'Properties', 'Filters', 'Asset Browser', 'Groups', 'Sets']} active="Asset Browser" />
      <div className="mt-[3px] flex pl-[6px]">
        <button aria-label="Tree view" className={toolButton}>
          <svg width="18" height="18" viewBox="0 0 18 18" fill="none">
            <path d="M3 5V15H8M3 9H8" stroke="#777" /><path d="M7 3.500H16M13 9.500H17M13 15.500H17" stroke="#ddd" />
            <path d="M1 2H5V5H1Z" fill="#7fb0dd" stroke="#222" strokeWidth="0.500" /><path d="M8 7H12V11H8ZM8 13H12V17H8Z" fill="#fff" stroke="#222" strokeWidth="0.500" />
          </svg>
        </button>
        <button aria-label="Split vertical" className={`${toolButton} bg-[#292929]`}>
          <svg width="14" height="16" viewBox="0 0 14 16"><path d="M0 1H6V15H0Z" fill="#e4e4e4" /><path d="M7 1H13V15H7Z" fill="#6ea3d6" /></svg>
        </button>
        <button aria-label="Split horizontal" className={toolButton}>
          <svg width="15" height="16" viewBox="0 0 15 16"><path d="M0 1H14V7H0Z" fill="#e4e4e4" /><path d="M0 8.500H14V15H0Z" fill="#6ea3d6" /><path d="M0 8H14" stroke="#222" /></svg>
        </button>
        <button aria-label="List" className={`${toolButton} ml-[10px]`}>
          <svg width="17" height="16" viewBox="0 0 17 16"><path d="M6 2.500H16M6 8.500H16M6 13.500H16" stroke="#ddd" /><path d="M1 1H4V4H1ZM1 12H4V15H1Z" fill="#7fb0dd" /><path d="M1 7H4V10H1Z" fill="#fff" /></svg>
        </button>
        <button aria-label="Thumbnails" className={`${toolButton} bg-[#292929]`}>
          <svg width="16" height="18" viewBox="0 0 16 18"><path d="M1 1H6V5H1ZM10 1H15V5H10ZM1 10H6V14H1ZM10 10H15V14H10Z" fill="#6ea3d6" /><path d="M0 7.500H7M9 7.500H16M0 16.500H7M9 16.500H16" stroke="#ddd" /></svg>
        </button>
        <button aria-label="Details" className={toolButton}><ListIcon /></button>
      </div>
      <div className="mt-1 flex min-h-0 flex-1 pl-[6px] pr-1">
        <ul className="w-[166px] border-l border-t border-r-2 border-[#5a5a5a] border-r-[#808080] bg-[#292929] pt-px leading-[15px]">
          {assetItems.map((item) => (
            <li key={item.label} className={`flex h-[15px] items-center ${item.child ? 'pl-[20px]' : 'pl-[5px]'}`}>
              <TreeToggle open={item.open} child={item.child} />
              <TreeIcon name={item.icon} />
              <span className="whitespace-nowrap pl-[3px]">{item.label}</span>
            </li>
          ))}
        </ul>
        <div className="ml-[7px] flex-1 border-l-2 border-r border-t border-[#5a5a5a] border-r-[#909090] bg-[#292929]" />
      </div>
    </section>
  );
}

export default function App() {
  return (
    <div className='flex h-screen flex-col overflow-hidden bg-[#444] font-["DejaVu_Sans_Condensed","Noto_Sans",sans-serif] text-[13px] leading-[16px] text-[#c8c8c8]'>
      <Defs />

      {/* Window title bar */}
      <header className="flex h-[29px] shrink-0 items-center bg-[#f2f2f2] pl-[3px]">
        <svg width="18" height="21" viewBox="0 0 18 21">
          <path d="M0 1L4 0V16L0 19Z" fill="#8fbc3f" /><path d="M3 0H18V14H3Z" fill="#8aa838" /><path d="M1 14H18V21H3Z" fill="#47602a" />
          <path d="M7 11V4L10.500 8L14 4V11" stroke="#fff" strokeWidth="2" fill="none" />
          <path d="M6 17.500H15" stroke="#d8e0cc" strokeWidth="2" strokeDasharray="2.500 1" />
        </svg>
        <h1 className='flex-1 pl-[6px] font-["Open_Sans",sans-serif] text-[14px] text-[#8c8c8c]'>MotionBuilder 2024 - Untitled</h1>
        <div className="flex items-center gap-[46px] pr-[26px]">
          <button aria-label="Minimize"><svg width="12" height="12" viewBox="0 0 12 12" stroke="#8c8c8c"><path d="M0 5.500H12" /></svg></button>
          <button aria-label="Restore">
            <svg width="12" height="12" viewBox="0 0 12 12" fill="none" stroke="#8c8c8c"><rect x="0.500" y="2.500" width="9" height="9" rx="1" /><path d="M3 0.500H10Q11.500 0.500 11.500 2V9" /></svg>
          </button>
          <button aria-label="Close window"><svg width="12" height="12" viewBox="0 0 12 12" stroke="#8c8c8c"><path d="M0 0L12 12M12 0L0 12" /></svg></button>
        </div>
      </header>

      <nav className="flex h-[27px] shrink-0 justify-between">
        <ul className="flex gap-[14px] pl-[9px] pt-1">
          {menus.map((menu) => (
            <li key={menu}><button>{menu}</button></li>
          ))}
        </ul>
        <button className="flex w-[150px] items-center bg-[#5d5d5d] pl-[5px] pr-1 text-[11px] text-[#e0e0e0]">
          <svg width="16" height="18" viewBox="0 0 16 18" fill="none" stroke="#eee" strokeWidth="1.500">
            <circle cx="8" cy="4.500" r="3.500" /><path d="M1 17Q1 10 8 10Q15 10 15 17" />
          </svg>
          <span className="flex-1 pl-[6px] pt-[2px] text-left">Justin Adams</span>
          <svg width="10" height="6" viewBox="0 0 10 6"><path d="M0 0H10L5 5.500Z" fill="#fff" /></svg>
        </button>
      </nav>

      <main className="flex min-h-0 flex-1">
        <section className="flex min-w-0 flex-1 flex-col">
          <div className="h-8 pr-[2px] pt-[2px]"><DockHeader title="Viewer" close={false} /></div>
          <div className="flex min-h-0 flex-1">
            <div className="flex min-w-0 flex-1 flex-col">
              <ViewerToolbar />
              <div className="relative min-h-0 flex-1 bg-[#292929]">
                <ContextMenu />
              </div>
            </div>
            <div className="pt-8"><SideTools /></div>
          </div>
        </section>
        <Handle className="mr-[3px] mt-[252px] h-[248px] w-[4px]" />
        <CharacterControls />
      </main>

      <StatusBar />
      <Handle className="mx-auto mt-px h-[4px] w-[848px] shrink-0" />
      <div className="mt-[3px] shrink-0"><Transport /></div>
      <Handle className="mx-auto mt-[2px] h-[4px] w-[848px] shrink-0" />

      <div className="mt-[3px] flex h-[445px] shrink-0">
        <Navigator />
        <Handle className="mx-[2px] mt-[146px] h-[144px] w-[4px]" />
        <div className="flex w-[386px] flex-col">
          <KeyControls />
          <AnimationLayers />
        </div>
        <Handle className="ml-px mt-[146px] h-[144px] w-[4px]" />
        <Resources />
      </div>

      <footer className="h-[5px] shrink-0 bg-linear-to-r from-[#1b1b60] via-[#1f1a5a] to-[#521420]" />
    </div>
  );
}
